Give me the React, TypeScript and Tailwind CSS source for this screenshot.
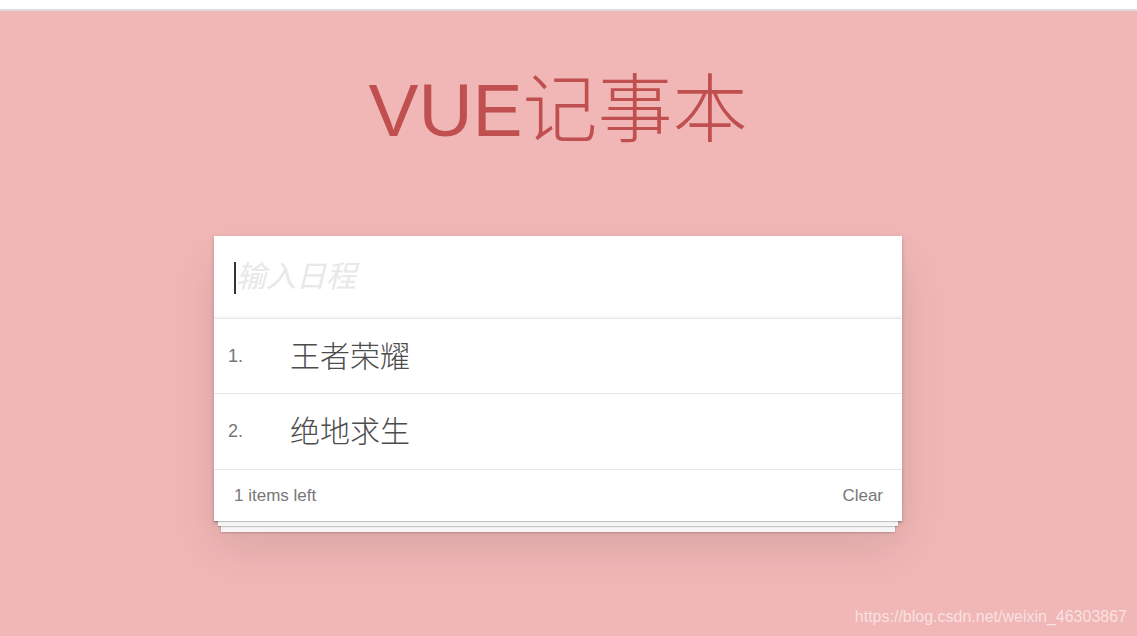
import React from "react";

const FONT = '"Liberation Sans", Arial, "Noto Sans CJK SC", sans-serif';

export default function App() {
  const items = ["王者荣耀", "绝地求生"];
  return (
    <div
      className="relative flex h-[636px] w-full flex-col overflow-hidden bg-white"
      style={{ fontFamily: FONT }}
    >
      <div className="h-[9px] bg-white" />
      <div className="h-[2px] bg-[#dcdcdc]" />
      <div className="flex flex-1 flex-col items-center bg-[#f0b7b6] pr-[21px]">
        <h1 className="mt-[62px] text-[75px] leading-[74px] font-light text-[#c0504f]">
          VUE记事本
        </h1>
        <div className="mt-[89px] w-[688px] bg-white shadow-[0_2px_4px_rgba(0,0,0,0.2),0_25px_50px_rgba(0,0,0,0.1)]">
          <div className="relative h-[82px] shadow-[inset_0_-2px_1px_rgba(0,0,0,0.03)]">
            <input
              className="h-full w-full bg-transparent pl-[22px] text-[30px] text-[#4d4d4d] italic outline-none placeholder:text-[#e8e8e8]"
              placeholder="输入日程"
              style={{ fontFamily: FONT }}
            />
            <div className="absolute top-[26px] left-[20px] h-[32px] w-[2px] bg-[#333]" />
          </div>
          <ul>
            {items.map((t, i) => (
              <li
                key={t}
                className={`flex items-center border-t border-[#e6e6e6] pl-[14px] ${
                  i === 0 ? "h-[75px]" : "h-[76px]"
                }`}
              >
                <span className="w-[62px] text-[18px] text-[#777]">{i + 1}.</span>
                <span className="text-[30px] font-light text-[#4d4d4d]">{t}</span>
              </li>
            ))}
          </ul>
          <footer className="flex h-[52px] items-center justify-between border-t border-[#e6e6e6] pr-[19px] pl-[20px] text-[17px] text-[#777] shadow-[0_1px_1px_rgba(0,0,0,0.2),0_9px_0_-4px_#f6f6f6,0_10px_1px_-4px_rgba(0,0,0,0.2),0_18px_0_-7px_#f6f6f6,0_19px_2px_-7px_rgba(0,0,0,0.2)]">
            <span>1 items left</span>
            <span>Clear</span>
          </footer>
        </div>
      </div>
      <div className="absolute right-[10px] bottom-[7px] text-[16px] text-white/60">
        https://blog.csdn.net/weixin_46303867
      </div>
    </div>
  );
}
